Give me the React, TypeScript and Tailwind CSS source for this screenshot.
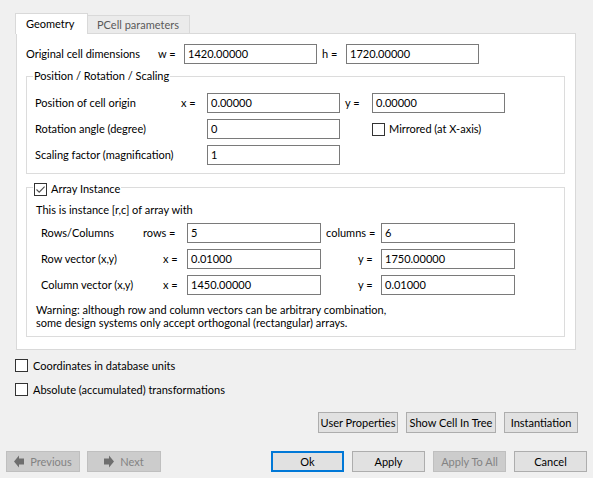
import React from "react";

const Field = ({ value, wide }: { value: string; wide?: boolean }) => (
  <div
    className={`${wide ? "w-[134px]" : "w-[133px]"} h-[20px] shrink-0 border border-[#7a7a7a] bg-white pl-[3px] flex items-center text-black`}
  >
    {value}
  </div>
);

const Check = ({ checked }: { checked?: boolean }) => (
  <div className="w-[13px] h-[13px] shrink-0 border border-[#333333] bg-white flex items-center justify-center">
    {checked && (
      <svg width="11" height="11" viewBox="0 0 11 11">
        <path d="M1.5 5.5 L4.2 8.2 L9.6 2.6" stroke="#4d4d4d" strokeWidth="1.1" fill="none" />
      </svg>
    )}
  </div>
);

const Btn = ({
  children,
  w,
  disabled,
  def,
}: {
  children: React.ReactNode;
  w: string;
  disabled?: boolean;
  def?: boolean;
}) => {
  const base = "h-[21px] shrink-0 flex items-center justify-center";
  const look = disabled
    ? "bg-[#cccccc] border border-[#bfbfbf] text-[#838383]"
    : def
    ? "bg-[#e1e1e1] border-2 border-[#0078d7] text-black"
    : "bg-[#e1e1e1] border border-[#adadad] text-black";
  return <div className={`${base} ${look} ${w}`}>{children}</div>;
};

const ArrowLeft = () => (
  <svg width="10" height="13" viewBox="0 0 10 13" className="shrink-0">
    <polygon points="0,6.5 5,0.5 5,3.5 10,3.5 10,9.5 5,9.5 5,12.5" fill="#6e6e6e" />
  </svg>
);

const ArrowRight = () => (
  <svg width="10" height="13" viewBox="0 0 10 13" className="shrink-0">
    <polygon points="10,6.5 5,0.5 5,3.5 0,3.5 0,9.5 5,9.5 5,12.5" fill="#6e6e6e" />
  </svg>
);

export default function App() {
  return (
    <div className="w-[593px] h-[478px] overflow-hidden bg-[#f0f0f0] font-['Lato',sans-serif] text-[11px] leading-[16px] text-black flex flex-col">
      {/* Tab widget */}
      <div className="ml-[16px] mt-[13px] w-[560px] flex flex-col">
        <div className="relative z-10 ml-[-1px] mb-[-1px] h-[21px] flex items-end">
          <div className="h-[21px] w-[73px] bg-white border border-b-0 border-[#d9d9d9] pl-[10px] pt-[2px]">
            Geometry
          </div>
          <div className="h-[19px] w-[103px] ml-[-1px] bg-[#ebebeb] border border-[#d9d9d9] pl-[9px] flex items-center text-[#5a5a5a]">
            PCell parameters
          </div>
        </div>
        <div className="h-[317px] border border-[#d9d9d9] bg-white flex flex-col pl-[9px]">
          {/* Original cell dimensions */}
          <div className="mt-[10px] h-[20px] flex items-center">
            <span className="w-[132px] shrink-0">Original cell dimensions</span>
            <span className="w-[26px] shrink-0">w =</span>
            <Field value="1420.00000" />
            <span className="ml-[5px] w-[24px] shrink-0">h =</span>
            <Field value="1720.00000" />
          </div>

          {/* Position / Rotation / Scaling */}
          <fieldset className="mt-[4px] w-[539px] border border-[#dcdcdc] pb-[8px]">
            <legend className="ml-[6px] px-[1px] leading-[16px]">Position / Rotation / Scaling</legend>
            <div className="mt-[9px] pl-[8px] h-[20px] flex items-center">
              <span className="w-[146px] shrink-0">Position of cell origin</span>
              <span className="w-[26px] shrink-0">x =</span>
              <Field value="0.00000" />
              <span className="ml-[5px] w-[27px] shrink-0">y =</span>
              <Field value="0.00000" />
            </div>
            <div className="mt-[6px] pl-[8px] h-[20px] flex items-center">
              <span className="w-[172px] shrink-0">Rotation angle (degree)</span>
              <Field value="0" />
              <div className="ml-[32px]">
                <Check />
              </div>
              <span className="ml-[4px]">Mirrored (at X-axis)</span>
            </div>
            <div className="mt-[6px] pl-[8px] h-[20px] flex items-center">
              <span className="w-[172px] shrink-0">Scaling factor (magnification)</span>
              <Field value="1" />
            </div>
          </fieldset>

          {/* Array Instance */}
          <fieldset className="mt-[3px] w-[539px] border border-[#dcdcdc] pb-[7px]">
            <legend className="ml-[6px] px-[1px] pt-[4px] h-[20px] flex items-center leading-[16px]">
              <Check checked />
              <span className="ml-[4px]">Array Instance</span>
            </legend>
            <div className="mt-[5px] pl-[9px]">This is instance [r,c] of array with</div>
            <div className="mt-[5px] pl-[14px] h-[20px] flex items-center">
              <span className="w-[102px] shrink-0">Rows/Columns</span>
              <span className="w-[44px] shrink-0">rows =</span>
              <Field value="5" wide />
              <span className="ml-[5px] w-[55px] shrink-0">columns =</span>
              <Field value="6" wide />
            </div>
            <div className="mt-[6px] pl-[14px] h-[20px] flex items-center">
              <span className="w-[122px] shrink-0">Row vector (x,y)</span>
              <span className="w-[24px] shrink-0">x =</span>
              <Field value="0.01000" wide />
              <span className="ml-[5px] w-[55px] pl-[32px] shrink-0">y =</span>
              <Field value="1750.00000" wide />
            </div>
            <div className="mt-[6px] pl-[14px] h-[20px] flex items-center">
              <span className="w-[122px] shrink-0">Column vector (x,y)</span>
              <span className="w-[24px] shrink-0">x =</span>
              <Field value="1450.00000" wide />
              <span className="ml-[5px] w-[55px] pl-[32px] shrink-0">y =</span>
              <Field value="0.01000" wide />
            </div>
            <div className="mt-[8px] pl-[9px] leading-[13px]">
              Warning: although row and column vectors can be arbitrary combination,
              <br />
              some design systems only accept orthogonal (rectangular) arrays.
            </div>
          </fieldset>
        </div>
      </div>

      {/* Options */}
      <div className="mt-[7px] pl-[15px] h-[17px] flex items-center">
        <Check />
        <span className="ml-[5px]">Coordinates in database units</span>
      </div>
      <div className="mt-[7px] pl-[15px] h-[17px] flex items-center">
        <Check />
        <span className="ml-[5px]">Absolute (accumulated) transformations</span>
      </div>

      {/* Action buttons */}
      <div className="mt-[14px] pr-[15px] flex justify-end gap-[8px]">
        <Btn w="w-[80px]">User Properties</Btn>
        <Btn w="w-[90px]">Show Cell In Tree</Btn>
        <Btn w="w-[74px]">Instantiation</Btn>
      </div>

      {/* Dialog buttons */}
      <div className="mt-[18px] pl-[6px] pr-[6px] flex items-center">
        <Btn w="w-[74px]" disabled>
          <ArrowLeft />
          <span className="ml-[6px]">Previous</span>
        </Btn>
        <div className="ml-[7px]">
          <Btn w="w-[74px]" disabled>
            <ArrowRight />
            <span className="ml-[6px]">Next</span>
          </Btn>
        </div>
        <div className="flex-1" />
        <div className="flex gap-[8px]">
          <Btn w="w-[73px]" def>
            Ok
          </Btn>
          <Btn w="w-[73px]">Apply</Btn>
          <Btn w="w-[73px]" disabled>
            Apply To All
          </Btn>
          <Btn w="w-[73px]">Cancel</Btn>
        </div>
      </div>
    </div>
  );
}
